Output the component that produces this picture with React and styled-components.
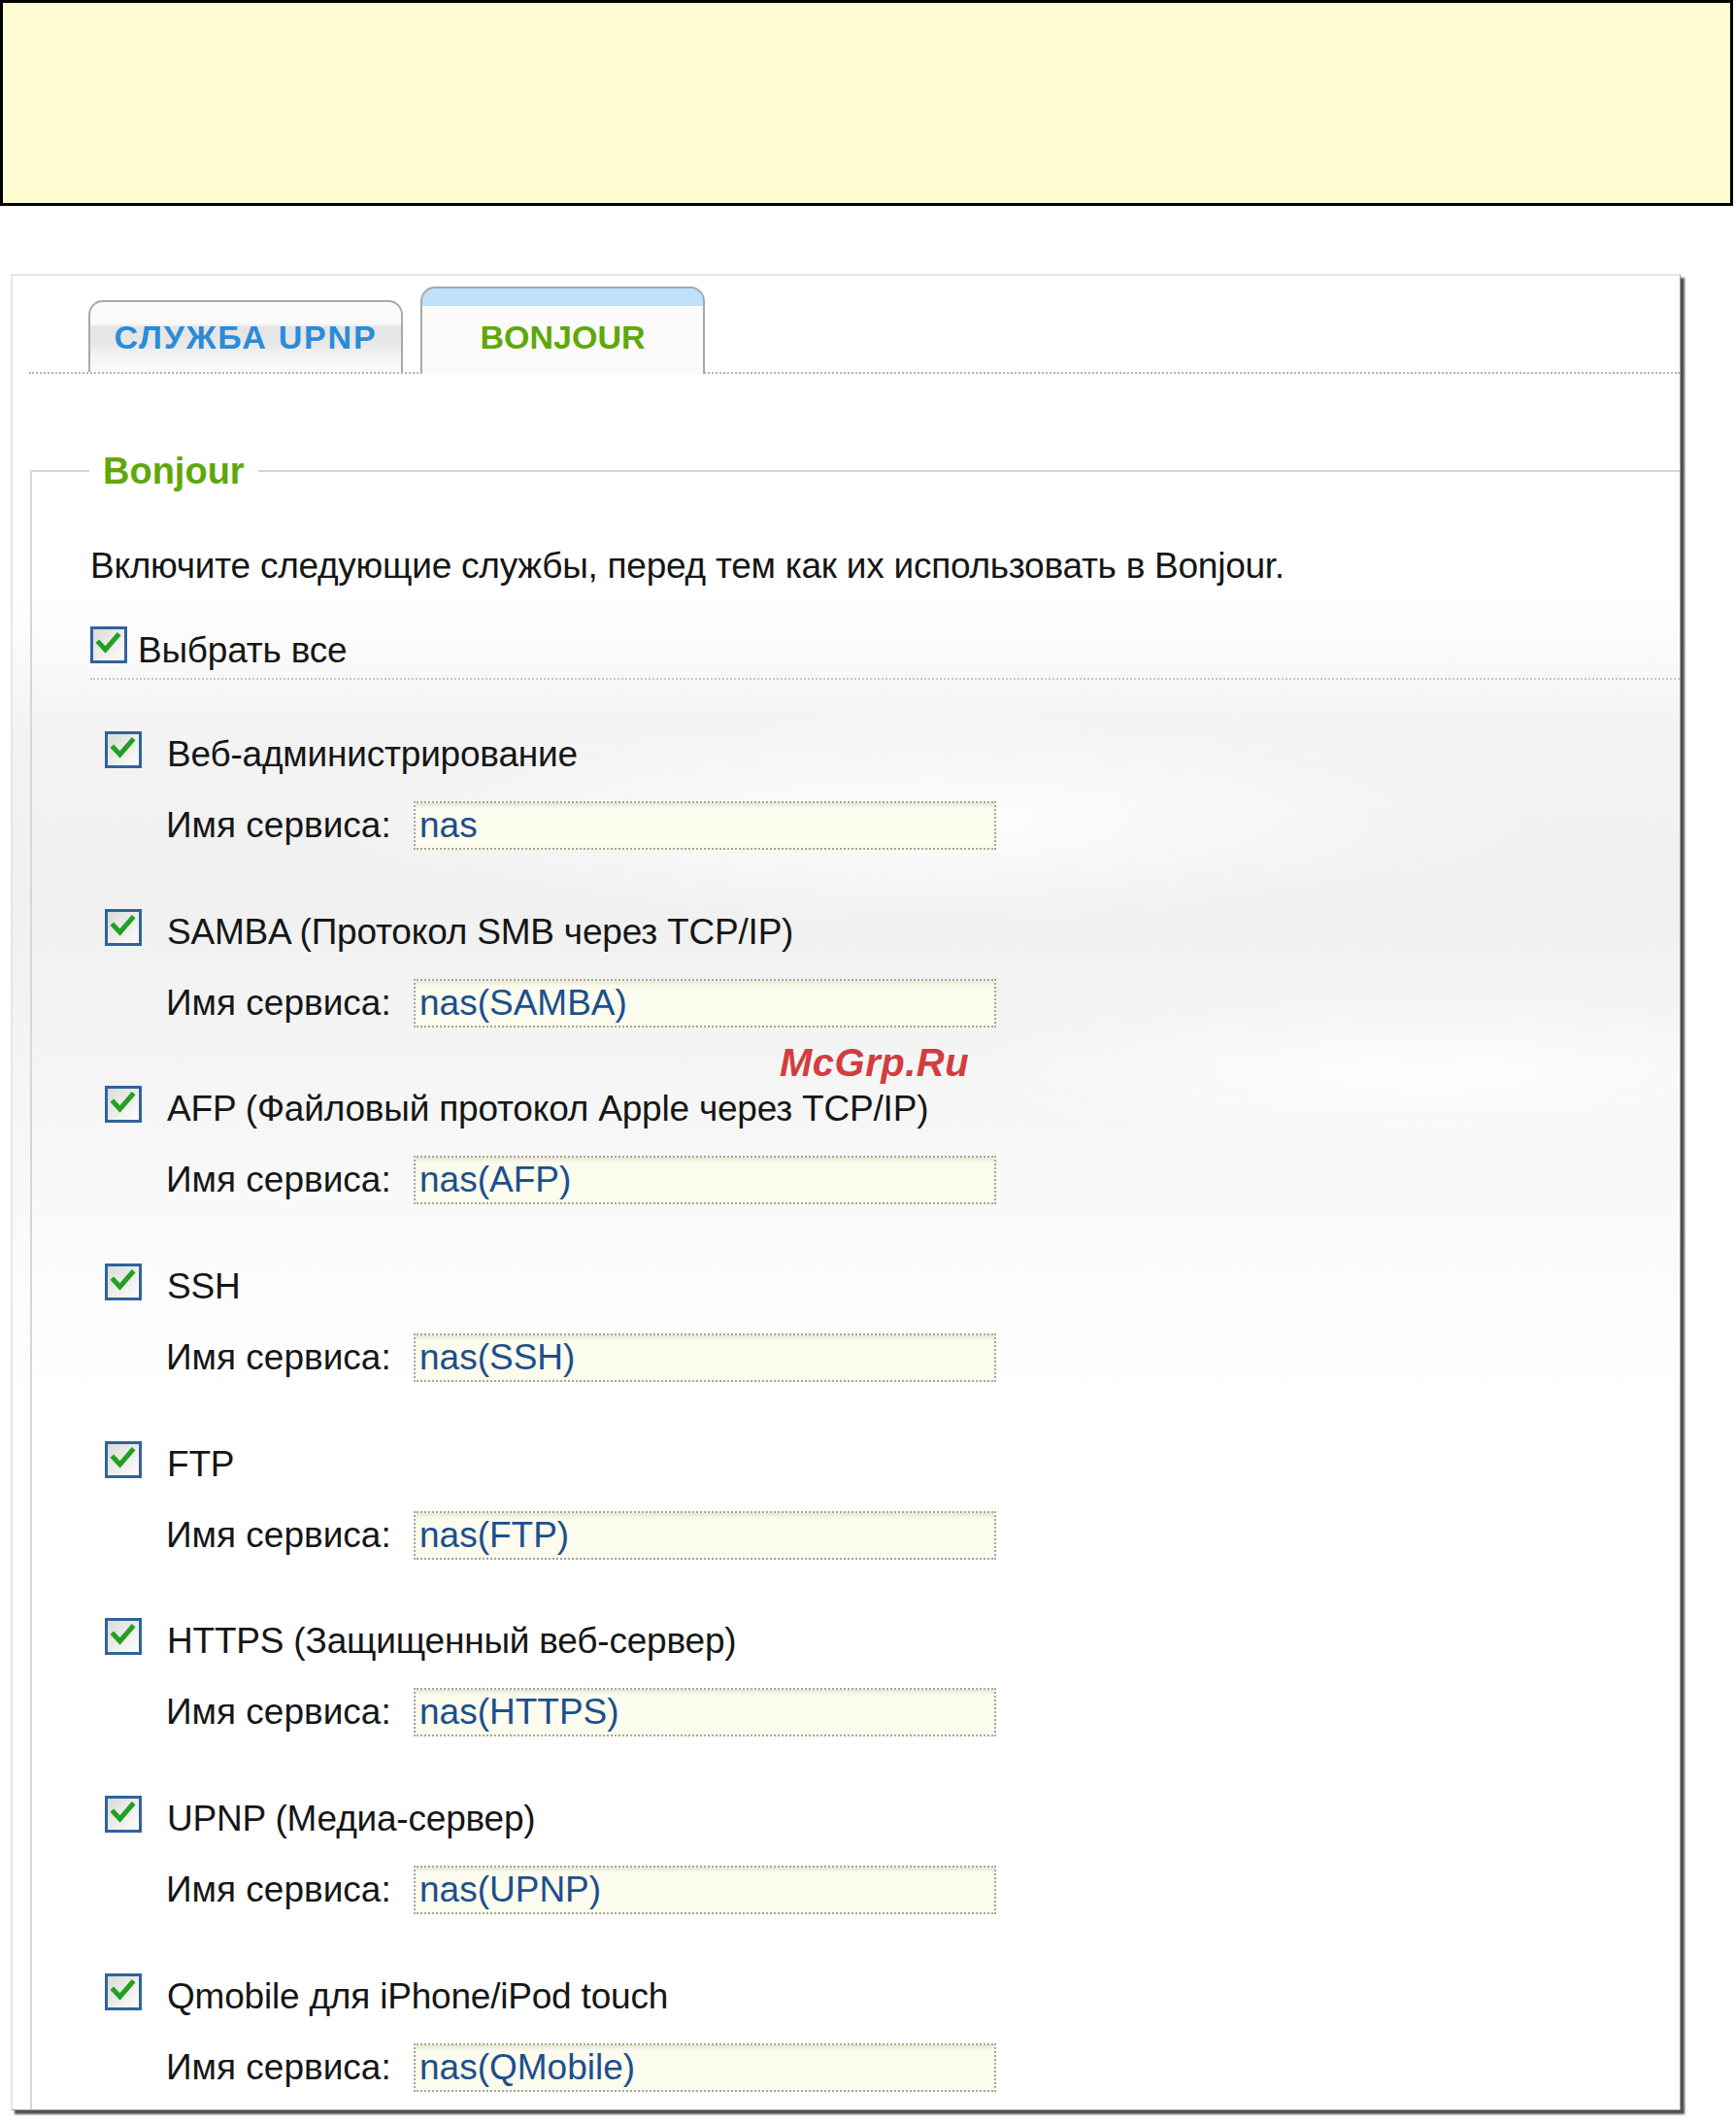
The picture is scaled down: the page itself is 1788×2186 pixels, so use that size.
import React from "react";
import styled, { createGlobalStyle } from "styled-components";

const Global = createGlobalStyle`
  html, body { margin: 0; padding: 0; background: #ffffff; }
  body { font-family: "Liberation Sans", Arial, sans-serif; color: #161616; }
  * { box-sizing: border-box; }
`;

const Page = styled.div`
  width: 1788px;
  min-height: 2186px;
  display: flex;
  flex-direction: column;
`;

const Note = styled.div`
  width: 1785px;
  height: 212px;
  background: #fffbd1;
  border: 3px solid #000;
`;

const Panel = styled.div`
  position: relative;
  margin: 70px 0 0 11px;
  width: 1720px;
  height: 1891px;
  display: flex;
  flex-direction: column;
  border-top: 2px solid #e6e6e6;
  border-left: 2px solid #e6e6e6;
  border-right: 1px solid #9a9a9a;
  border-bottom: 1px solid #9a9a9a;
  box-shadow: 4px 4px 2px rgba(50, 50, 50, 0.85);
  background:
    radial-gradient(ellipse 900px 160px at 55% 560px, rgba(255,255,255,0.9), rgba(255,255,255,0) 70%),
    radial-gradient(ellipse 700px 120px at 85% 820px, rgba(255,255,255,0.85), rgba(255,255,255,0) 70%),
    linear-gradient(180deg, #ffffff 0px, #ffffff 330px, #f3f3f3 470px, #f0f0f0 640px, #f6f6f6 860px, #fcfcfc 1040px, #ffffff 1150px);
`;

const TabStrip = styled.div`
  margin: 11px 0 0 17px;
  padding-left: 61px;
  display: flex;
  align-items: flex-end;
  gap: 18px;
  border-bottom: 2px dotted #b4b4b4;
`;

const Tab = styled.div`
  position: relative;
  z-index: 1;
  display: flex;
  align-items: flex-end;
  justify-content: center;
  width: ${(p) => p.$w}px;
  height: ${(p) => (p.$active ? 90 : 74)}px;
  margin-bottom: ${(p) => (p.$active ? -2 : 0)}px;
  padding-bottom: ${(p) => (p.$active ? 18 : 16)}px;
  border: 2px solid #a9a9a9;
  border-bottom: none;
  border-radius: 15px 15px 0 0;
  font-family: "Liberation Sans", Arial, sans-serif;
  font-weight: bold;
  font-size: 34px;
  line-height: 40px;
  letter-spacing: ${(p) => p.$spacing || 0}px;
  color: ${(p) => (p.$active ? "#5fa80a" : "#2a8bd9")};
  background: ${(p) =>
    p.$active
      ? "linear-gradient(180deg, #bfe1fb 0px, #bfe1fb 18px, #fcfbf9 18px, #fcfbf9 100%)"
      : "linear-gradient(180deg, #fbfbfb 0px, #fbfbfb 22px, #e4e4e4 26px, #e8e8e8 44px, #f3f3f3 54px, #fafafa 72px)"};
`;

const Fieldset = styled.fieldset`
  flex: 1;
  margin: 78px 0 0 18px;
  padding: 54px 0 0 60px;
  min-width: 0;
  border: none;
  border-top: 2px solid #d6d6d6;
  border-left: 2px solid #d6d6d6;
  display: flex;
  flex-direction: column;
`;

const Legend = styled.legend`
  padding: 0 14px;
  margin-left: -1px;
  font-family: "Liberation Sans", Arial, sans-serif;
  font-weight: bold;
  font-size: 38px;
  line-height: 44px;
  color: #5fa80a;
`;

const Description = styled.p`
  margin: 0;
  font-size: 37px;
  line-height: 44px;
  letter-spacing: -0.25px;
  color: #161616;
`;

const SelectAllRow = styled.div`
  margin-top: 40px;
  padding-bottom: 6px;
  display: flex;
  align-items: flex-start;
  gap: 11px;
  border-bottom: 2px dotted #c6c6c6;
`;

const Text = styled.span`
  margin-top: ${(p) => p.$offset || 0}px;
  font-size: 37px;
  line-height: 44px;
  letter-spacing: -0.2px;
  color: #161616;
  white-space: nowrap;
`;

const ItemList = styled.div`
  margin: 53px 0 0 15px;
  display: flex;
  flex-direction: column;
  gap: 60.7px;
`;

const Item = styled.div`
  display: flex;
  flex-direction: column;
  gap: 26px;
`;

const ItemHead = styled.div`
  display: flex;
  align-items: flex-start;
  gap: 26px;
`;

const ServiceRow = styled.div`
  display: flex;
  align-items: center;
  padding-left: 63px;
`;

const ServiceLabel = styled.span`
  width: 255px;
  font-size: 37px;
  line-height: 50px;
  color: #161616;
  white-space: nowrap;
`;

const ServiceInput = styled.input`
  width: 600px;
  height: 50px;
  padding: 0 0 0 4px;
  border: 2px dotted #a6a692;
  background: #fbfbee;
  box-shadow: inset 0 4px 4px -2px rgba(120, 120, 90, 0.18);
  font-family: "Liberation Sans", Arial, sans-serif;
  font-size: 37px;
  line-height: 46px;
  color: #1d4f8c;
  outline: none;
`;

const Watermark = styled.div`
  position: absolute;
  left: 790px;
  top: 785px;
  font-family: "Liberation Sans", Arial, sans-serif;
  font-style: italic;
  font-weight: bold;
  font-size: 40px;
  line-height: 50px;
  letter-spacing: 0.5px;
  color: rgba(204, 36, 36, 0.9);
  pointer-events: none;
`;

const Box = styled.svg`
  flex: none;
  display: block;
`;

function CheckBox() {
  return (
    <Box width="38" height="38" viewBox="0 0 38 38">
      <defs>
        <linearGradient id="cbg" x1="0" y1="0" x2="1" y2="1">
          <stop offset="0" stopColor="#d9d9d6" />
          <stop offset="1" stopColor="#ffffff" />
        </linearGradient>
      </defs>
      <rect x="1.5" y="1.5" width="35" height="35" fill="url(#cbg)" stroke="#30639d" strokeWidth="3" />
      <polyline
        points="9,17 15.5,24 28,9.5"
        fill="none"
        stroke="#22a022"
        strokeWidth="5"
        strokeLinecap="square"
        strokeLinejoin="miter"
      />
    </Box>
  );
}

const services = [
  ["Веб-администрирование", "nas"],
  ["SAMBA (Протокол SMB через TCP/IP)", "nas(SAMBA)"],
  ["AFP (Файловый протокол Apple через TCP/IP)", "nas(AFP)"],
  ["SSH", "nas(SSH)"],
  ["FTP", "nas(FTP)"],
  ["HTTPS (Защищенный веб-сервер)", "nas(HTTPS)"],
  ["UPNP (Медиа-сервер)", "nas(UPNP)"],
  ["Qmobile для iPhone/iPod touch", "nas(QMobile)"],
];

export default function App() {
  return (
    <Page>
      <Global />
      <Note />
      <Panel>
        <TabStrip>
          <Tab $w={324} $spacing={1.8}>СЛУЖБА UPNP</Tab>
          <Tab $w={293} $active>BONJOUR</Tab>
        </TabStrip>
        <Fieldset>
          <Legend>Bonjour</Legend>
          <Description>
            Включите следующие службы, перед тем как их использовать в Bonjour.
          </Description>
          <SelectAllRow>
            <CheckBox />
            <Text $offset={3}>Выбрать все</Text>
          </SelectAllRow>
          <ItemList>
            {services.map(([label, value]) => (
              <Item key={value}>
                <ItemHead>
                  <CheckBox />
                  <Text $offset={2}>{label}</Text>
                </ItemHead>
                <ServiceRow>
                  <ServiceLabel>Имя сервиса:</ServiceLabel>
                  <ServiceInput readOnly value={value} />
                </ServiceRow>
              </Item>
            ))}
          </ItemList>
        </Fieldset>
        <Watermark>McGrp.Ru</Watermark>
      </Panel>
    </Page>
  );
}
